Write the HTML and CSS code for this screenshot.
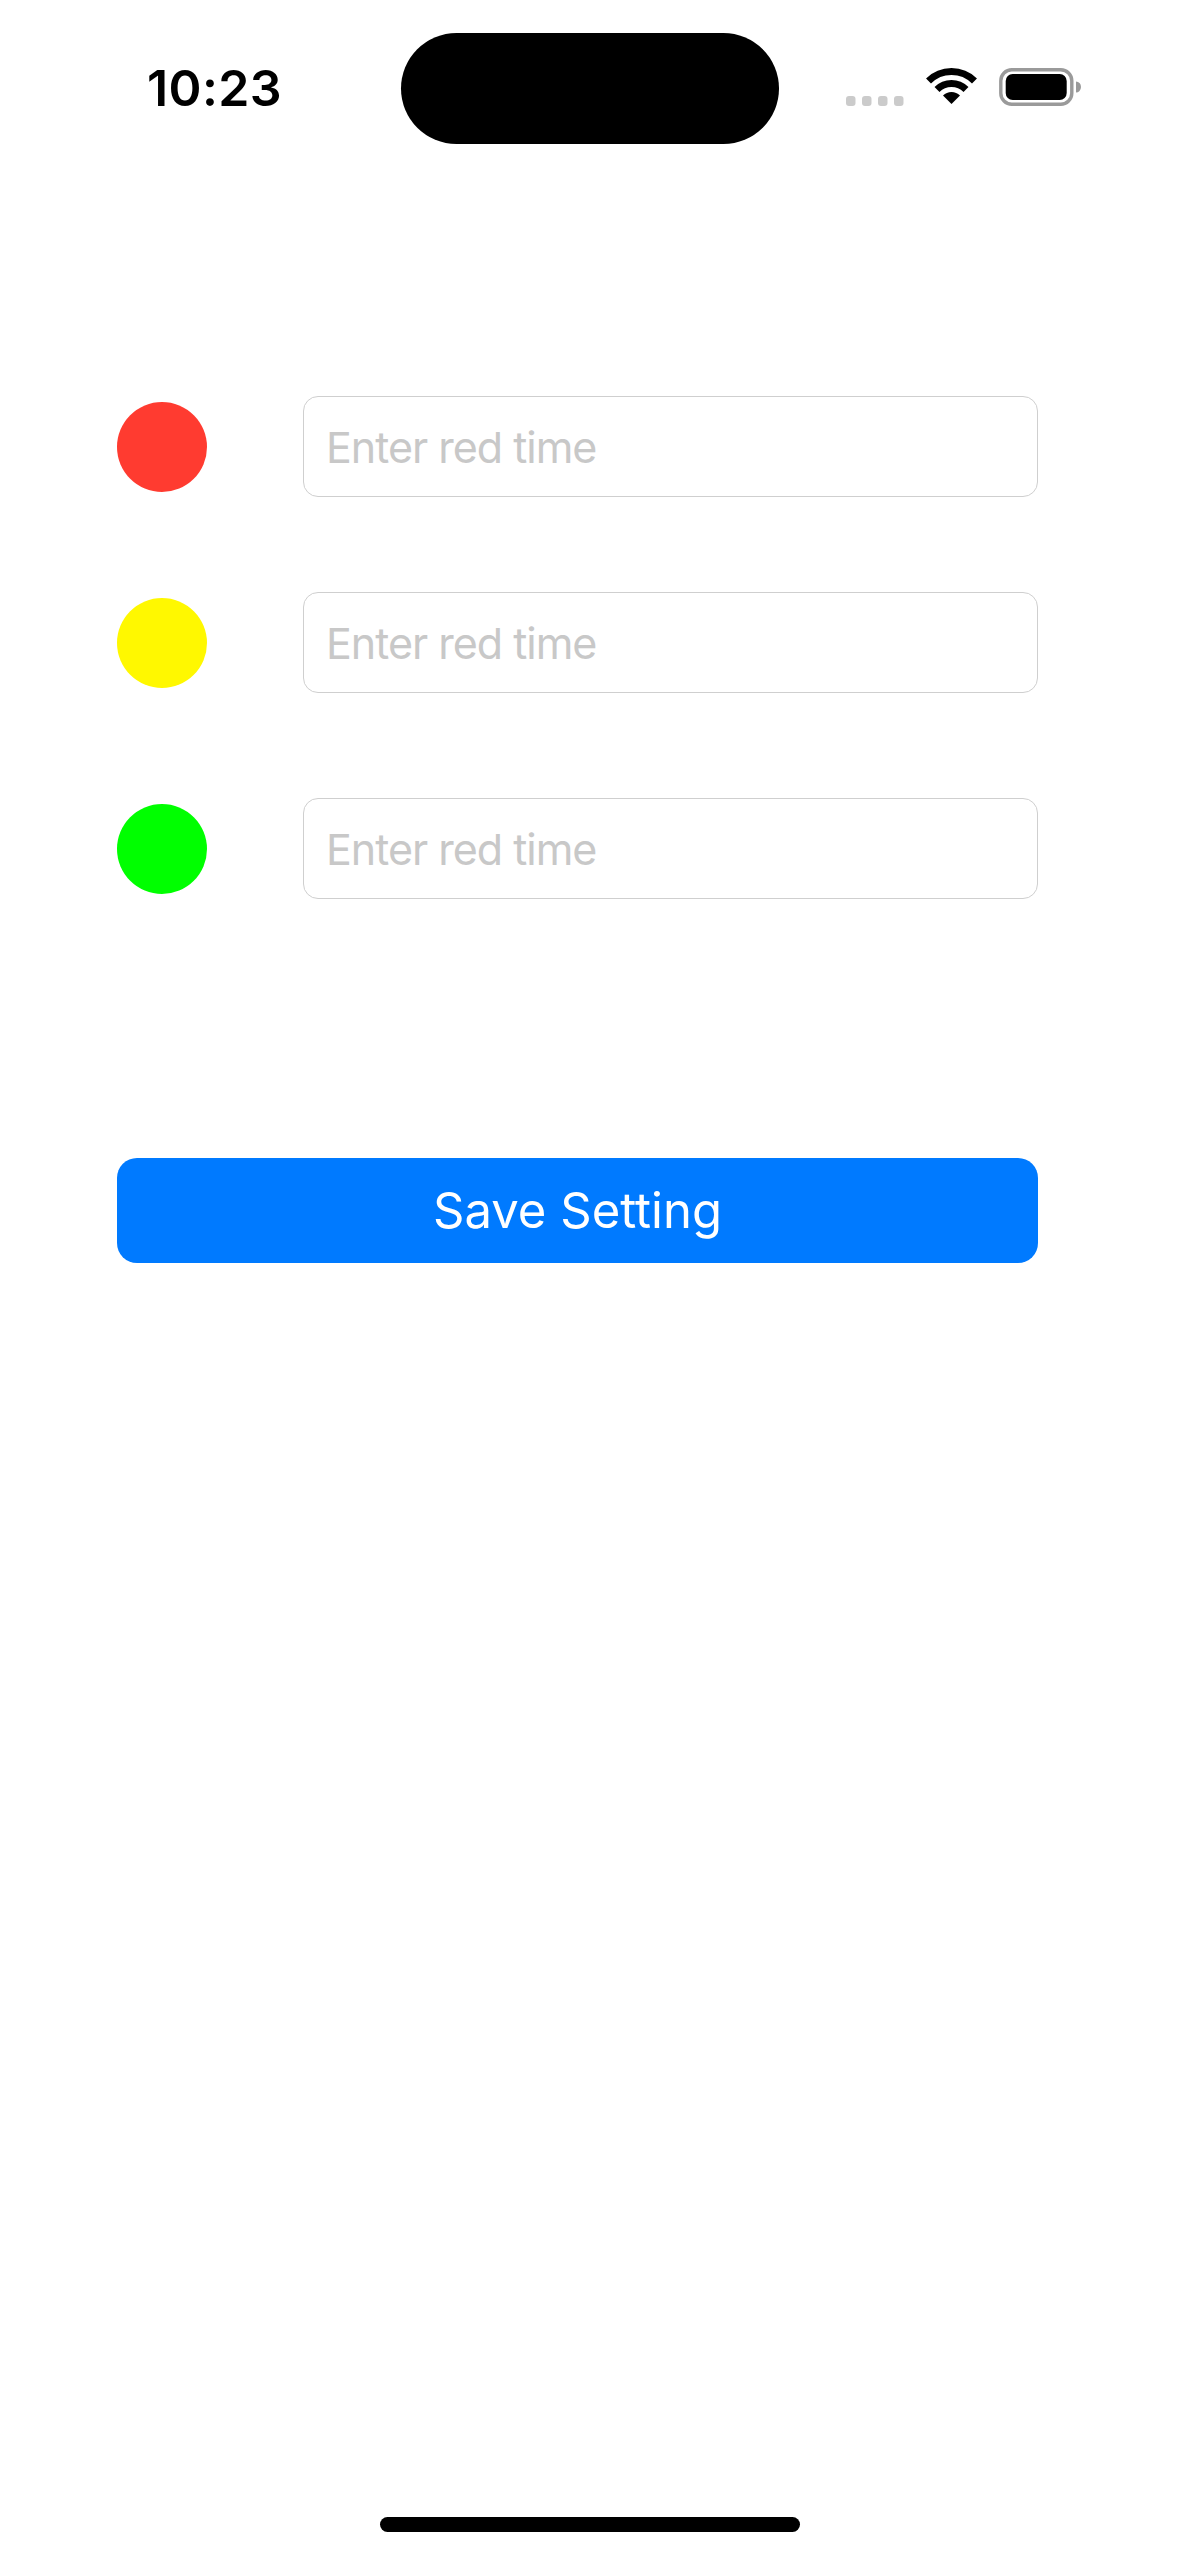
FILE: index.html
```html
<!DOCTYPE html>
<html lang="en">
<head>
<meta charset="utf-8">
<meta name="viewport" content="width=1179">
<title>Traffic Light Settings</title>
<link rel="stylesheet" href="styles.css">
</head>
<body>
<div class="screen">
  <header class="status">
    <span class="time">10:23</span>
    <div class="status-icons">
      <svg class="signal" width="58" height="10" viewBox="0 0 58 10" aria-hidden="true">
        <rect x="0" y="0" width="9.5" height="10" rx="3" fill="#cbcbcb"/>
        <rect x="16" y="0" width="9.5" height="10" rx="3" fill="#cbcbcb"/>
        <rect x="32" y="0" width="9.5" height="10" rx="3" fill="#cbcbcb"/>
        <rect x="48" y="0" width="9.5" height="10" rx="3" fill="#cbcbcb"/>
      </svg>
      <svg class="wifi" width="51" height="37" viewBox="0 0 51 37" aria-hidden="true">
        <path d="M2.52 13.02 A32.5 32.5 0 0 1 48.48 13.02" fill="none" stroke="#000" stroke-width="7"/>
        <path d="M11 21.5 A20.5 20.5 0 0 1 40 21.5" fill="none" stroke="#000" stroke-width="7"/>
        <path d="M25.5 36 L17.01 27.51 A12 12 0 0 1 33.99 27.51 Z" fill="#000"/>
      </svg>
      <svg class="battery" width="82" height="38" viewBox="0 0 82 38" aria-hidden="true">
        <rect x="1.8" y="1.8" width="71" height="34.4" rx="11" fill="none" stroke="#9a9a9a" stroke-width="3.4"/>
        <rect x="6.7" y="6" width="61" height="26" rx="7" fill="#000"/>
        <path d="M77 13.5 A5 5.5 0 0 1 77 24.5 Z" fill="#9a9a9a"/>
      </svg>
    </div>
  </header>
  <div class="island" aria-hidden="true"></div>

  <main class="content">
    <div class="row">
      <span class="light light-red"></span>
      <input class="field" type="text" placeholder="Enter red time">
    </div>
    <div class="row">
      <span class="light light-yellow"></span>
      <input class="field" type="text" placeholder="Enter red time">
    </div>
    <div class="row row-last">
      <span class="light light-green"></span>
      <input class="field" type="text" placeholder="Enter red time">
    </div>
    <button class="save" type="button">Save Setting</button>
  </main>

  <div class="home-indicator" aria-hidden="true"></div>
</div>
</body>
</html>
```

FILE: styles.css
```css
* {
  box-sizing: border-box;
}

html, body {
  margin: 0;
  padding: 0;
  background: #ffffff;
}

body {
  font-family: "Inter", "Roboto", "Liberation Sans", sans-serif;
  color: #000;
}

.screen {
  position: relative;
  width: 1179px;
  min-height: 2556px;
  overflow: hidden;
}

/* Status bar */
.status {
  display: flex;
  justify-content: space-between;
  align-items: flex-start;
  height: 150px;
  padding: 0 98px 0 147px;
}

.time {
  margin-top: 63px;
  font-size: 50px;
  line-height: 50px;
  font-weight: 600;
  letter-spacing: 0.4px;
}

.status-icons {
  margin-top: 68px;
  height: 38px;
  display: flex;
  align-items: flex-end;
}

.signal {
  display: block;
  margin-right: 22px;
}

.wifi {
  display: block;
  margin-right: 22px;
  margin-bottom: 1px;
}

.battery {
  display: block;
}

.island {
  position: absolute;
  top: 33px;
  left: 401px;
  width: 378px;
  height: 111px;
  border-radius: 56px;
  background: #000;
}

/* Content */
.content {
  display: flex;
  flex-direction: column;
  padding: 246px 141px 0 117px;
}

.row {
  display: flex;
  align-items: center;
  gap: 96px;
  height: 101px;
}

.row + .row {
  margin-top: 95px;
}

.row-last {
  margin-top: 105px !important;
}

.light {
  flex: 0 0 90px;
  width: 90px;
  height: 90px;
  border-radius: 50%;
}

.light-red {
  background: #ff3b30;
}

.light-yellow {
  background: #fff800;
}

.light-green {
  background: #00ff00;
}

.field {
  flex: 1 1 auto;
  min-width: 0;
  height: 101px;
  margin: 0;
  padding: 0 22px;
  border: 1.5px solid #cfcfcf;
  border-radius: 15px;
  background: #fff;
  font-family: "Inter", "Roboto", "Liberation Sans", sans-serif;
  font-size: 43px;
  letter-spacing: -1px;
  color: #000;
  outline: none;
}

.field::placeholder {
  color: #c8c8c8;
  opacity: 1;
}

.save {
  margin-top: 259px;
  height: 105px;
  width: 100%;
  border: 0;
  border-radius: 20px;
  background: #007aff;
  color: #fff;
  font-family: "Inter", "Roboto", "Liberation Sans", sans-serif;
  font-size: 49px;
  font-weight: 400;
  padding: 0;
  cursor: pointer;
}

.home-indicator {
  position: absolute;
  bottom: 24px;
  left: 380px;
  width: 420px;
  height: 15px;
  border-radius: 8px;
  background: #000;
}
```
